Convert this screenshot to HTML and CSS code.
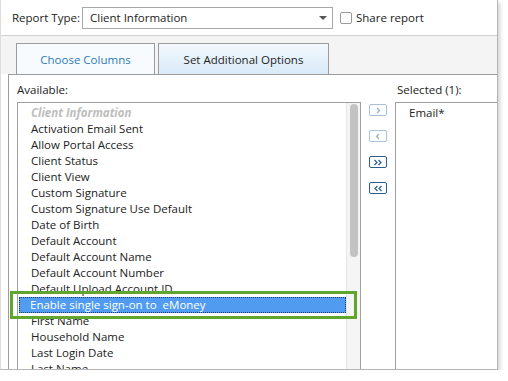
FILE: index.html
```html
<!DOCTYPE html>
<html lang="en">
<head>
    <meta charset="UTF-8">
    <title>Report Type - Choose Columns</title>
    <link rel="stylesheet" href="styles.css">
</head>
<body>
    <div class="window">
        <div class="report-row">
            <span class="report-label">Report Type:</span>
            <div class="select">
                <span>Client Information</span>
                <span class="caret"></span>
            </div>
            <label class="share">
                <span class="checkbox"></span>
                Share report
            </label>
        </div>

        <div class="tabbar">
            <div class="tab tab-link">Choose Columns</div>
            <div class="tab tab-active">Set Additional Options</div>
        </div>

        <div class="panel">
            <div class="columns">
                <div class="col-label">Available:</div>
                <div></div>
                <div class="col-label">Selected (1):</div>

                <div class="listbox">
                    <ul class="items">
                        <li class="group">Client Information</li>
                        <li>Activation Email Sent</li>
                        <li>Allow Portal Access</li>
                        <li>Client Status</li>
                        <li>Client View</li>
                        <li>Custom Signature</li>
                        <li>Custom Signature Use Default</li>
                        <li>Date of Birth</li>
                        <li>Default Account</li>
                        <li>Default Account Name</li>
                        <li>Default Account Number</li>
                        <li>Default Upload Account ID</li>
                        <li class="picked">Enable single sign-on to &nbsp;eMoney</li>
                        <li>First Name</li>
                        <li>Household Name</li>
                        <li>Last Login Date</li>
                        <li>Last Name</li>
                    </ul>
                    <div class="scrollbar"><div class="thumb"></div></div>
                </div>

                <div class="movers">
                    <button class="mover off">
                        <svg width="8" height="7" viewBox="0 0 8 7"><path d="M3 1l2.5 2.5L3 6" fill="none" stroke="currentColor" stroke-width="1.2"/></svg>
                    </button>
                    <button class="mover off">
                        <svg width="8" height="7" viewBox="0 0 8 7"><path d="M5 1L2.5 3.5 5 6" fill="none" stroke="currentColor" stroke-width="1.2"/></svg>
                    </button>
                    <button class="mover">
                        <svg width="10" height="7" viewBox="0 0 10 7"><path d="M1.5 1L4 3.5 1.5 6M5.5 1L8 3.5 5.5 6" fill="none" stroke="currentColor" stroke-width="1.3"/></svg>
                    </button>
                    <button class="mover">
                        <svg width="10" height="7" viewBox="0 0 10 7"><path d="M4.5 1L2 3.5 4.5 6M8.5 1L6 3.5 8.5 6" fill="none" stroke="currentColor" stroke-width="1.3"/></svg>
                    </button>
                </div>

                <div class="selected-box">
                    <ul class="items">
                        <li>Email*</li>
                    </ul>
                </div>
            </div>
        </div>
    </div>
</body>
</html>
```

FILE: styles.css
```css
body {
    margin: 0;
    background: #fff;
    font-family: 'Open Sans', 'Noto Sans', sans-serif;
    font-size: 11.5px;
    color: #222;
}
.window {
    width: 496px;
    height: 369px;
    border-left: 1px solid #dcdcdc;
    border-right: 1px solid #b5b5b5;
    border-bottom: 1px solid #b5b5b5;
    box-shadow: 2px 3px 4px rgba(0, 0, 0, 0.18);
    overflow: hidden;
    background: #fff;
}
.report-row {
    display: flex;
    align-items: center;
    height: 35px;
    padding-left: 11px;
    box-sizing: border-box;
}
.report-label {
    width: 70px;
}
.select {
    display: flex;
    align-items: center;
    justify-content: space-between;
    width: 251px;
    height: 22px;
    box-sizing: border-box;
    border: 1px solid #a8a8a8;
    padding: 0 5px 0 7px;
}
.caret {
    width: 0;
    height: 0;
    border-left: 4px solid transparent;
    border-right: 4px solid transparent;
    border-top: 4px solid #555;
}
.share {
    display: flex;
    align-items: center;
    gap: 4px;
    margin-left: 7px;
}
.checkbox {
    width: 10px;
    height: 10px;
    border: 1px solid #9a9a9a;
    border-radius: 2px;
}
.tabbar {
    display: flex;
    align-items: flex-end;
    gap: 3px;
    height: 39px;
    box-sizing: border-box;
    border-top: 1px solid #d2d2d2;
    background: #f4f4f4;
    padding-left: 15px;
}
.tab {
    height: 31px;
    box-sizing: border-box;
    border: 1px solid #9c9c9c;
    border-bottom: none;
    display: flex;
    align-items: center;
    justify-content: center;
    font-size: 11.5px;
}
.tab-link {
    width: 139px;
    background: #f8fbfd;
    color: #2b7cb3;
}
.tab-active {
    width: 171px;
    background: linear-gradient(#f2f8fd, #d9eaf8);
    color: #1e1e1e;
}
.panel {
    margin-left: 7px;
    border-left: 1px solid #9c9c9c;
    border-top: 1px solid #9c9c9c;
    padding: 7px 0 0 8px;
}
.columns {
    display: grid;
    grid-template-columns: 344px 18px 110px;
    grid-template-rows: 16px auto;
    column-gap: 8px;
    row-gap: 4px;
    align-items: start;
}
.columns > :nth-child(3) {
    margin-left: 2px;
}
.col-label {
    line-height: 16px;
}
.listbox {
    position: relative;
    height: 268px;
    border: 1px solid #a0a0a0;
    border-bottom: none;
}
.items {
    list-style: none;
    margin: 0;
    padding: 2px 0 0 0;
}
.items li {
    position: relative;
    height: 16px;
    line-height: 16px;
    padding-left: 13px;
    white-space: nowrap;
}
.items .group {
    color: #bdbdbd;
    font-weight: bold;
    font-style: italic;
}
.items .picked {
    margin: 0 14px 0 1px;
    padding-left: 11px;
    background: #519bf0;
    color: #fff;
    outline: 1px dotted #1d3e6e;
    outline-offset: -1px;
}
.items .picked::after {
    content: "";
    position: absolute;
    z-index: 2;
    left: -9px;
    right: -11px;
    top: -6px;
    bottom: -6px;
    border: 3px solid #60a52c;
}
.scrollbar {
    position: absolute;
    top: 0;
    right: 0;
    width: 13px;
    height: 100%;
    background: #f5f5f5;
    border-left: 1px solid #e6e6e6;
}
.thumb {
    width: 8px;
    height: 153px;
    margin: 1px 0 0 3px;
    background: #c3c3c3;
    border-radius: 4px;
}
.movers {
    display: flex;
    flex-direction: column;
    gap: 14px;
    padding-top: 2px;
}
.mover {
    width: 18px;
    height: 12px;
    padding: 0;
    display: flex;
    align-items: center;
    justify-content: center;
    background: #fff;
    border: 1px solid #2f5e8c;
    border-radius: 2px;
    color: #2f5e8c;
}
.mover.off {
    border-color: #a9c2da;
    color: #8fb0cf;
}
.selected-box {
    height: 268px;
    border-left: 1px solid #a0a0a0;
    border-top: 1px solid #a0a0a0;
}
.selected-box .items li {
    padding-left: 13px;
}
```
